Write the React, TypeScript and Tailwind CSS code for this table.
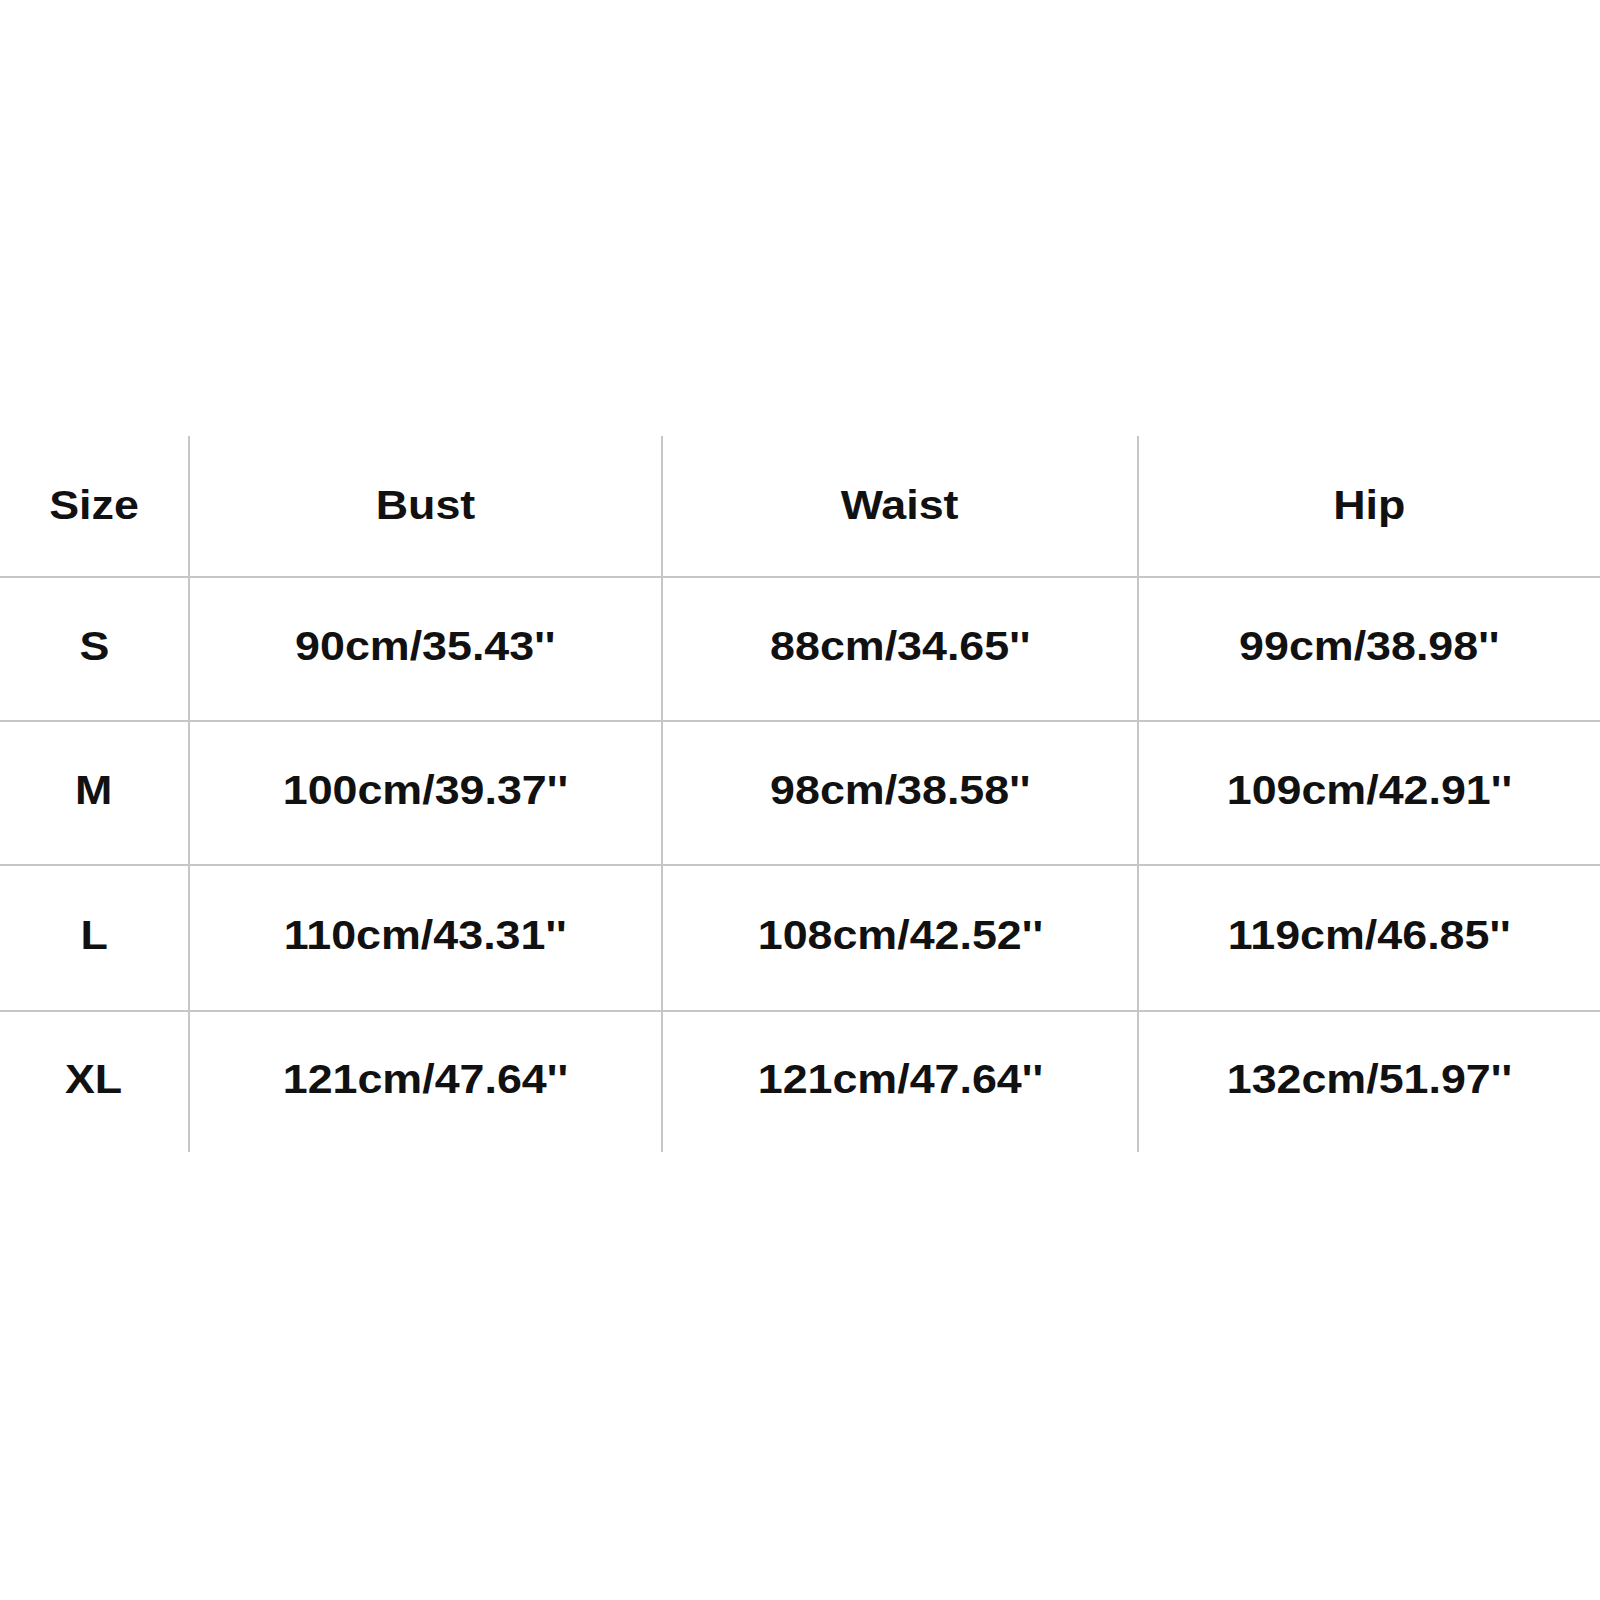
import React from "react";

const rows = [
  { h: "h-[144px]", cells: ["S", "90cm/35.43''", "88cm/34.65''", "99cm/38.98''"] },
  { h: "h-[144px]", cells: ["M", "100cm/39.37''", "98cm/38.58''", "109cm/42.91''"] },
  { h: "h-[146px]", cells: ["L", "110cm/43.31''", "108cm/42.52''", "119cm/46.85''"] },
  { h: "h-[142px]", cells: ["XL", "121cm/47.64''", "121cm/47.64''", "132cm/51.97''"] },
];

const header = ["Size", "Bust", "Waist", "Hip"];

function Cell({ text, first, top, h, header: isHeader }: { text: string; first: boolean; top: boolean; h: string; header?: boolean }) {
  return (
    <div
      className={
        "flex items-center justify-center " +
        h +
        (first ? "" : " border-l-2 border-[#c6c6c6]") +
        (top ? " border-t-2 border-t-[#c6c6c6]" : "") +
        (isHeader ? " pb-[2px]" : " pb-[6px]")
      }
    >
      <span className="inline-block scale-x-[1.12] text-[40px] font-bold leading-none text-[#111111] whitespace-nowrap">
        {text}
      </span>
    </div>
  );
}

export default function App() {
  return (
    <div
      className="w-[1600px] h-[1600px] bg-white pt-[436px]"
      style={{ fontFamily: '"Liberation Sans", Arial, sans-serif' }}
    >
      <div className="grid grid-cols-[188px_473px_476px_1fr]">
        {header.map((t, i) => (
          <Cell key={t} text={t} first={i === 0} top={false} h="h-[140px]" header />
        ))}
        {rows.map((r, ri) =>
          r.cells.map((t, i) => (
            <Cell key={ri + "-" + i} text={t} first={i === 0} top={true} h={r.h} />
          ))
        )}
      </div>
    </div>
  );
}
